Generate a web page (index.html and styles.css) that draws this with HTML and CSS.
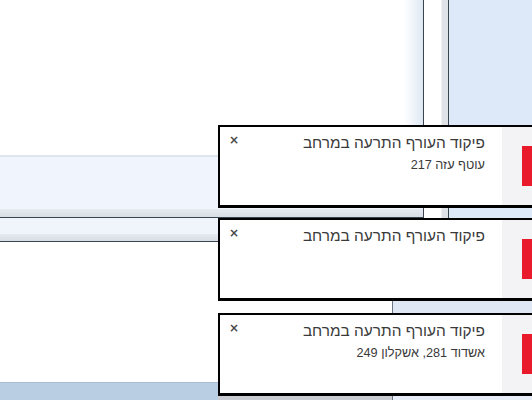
FILE: index.html
```html
<!DOCTYPE html>
<html lang="he">
<head>
<meta charset="utf-8">
<title>התרעות</title>
<link rel="stylesheet" href="styles.css">
</head>
<body>
<div class="desktop">
  <div class="win win-a">
    <div class="win-a-content"></div>
    <div class="status">
      <div class="status-fill"></div>
      <div class="status-edge"></div>
    </div>
  </div>
  <div class="win win-strip"></div>
  <div class="win win-right"></div>
  <div class="win win-b">
    <div class="status-fill short"></div>
    <div class="status-edge"></div>
  </div>
  <div class="win win-c"></div>
  <div class="win win-c-side"></div>
  <div class="taskbar">
    <div class="task-left"></div>
    <div class="task-btn"></div>
    <div class="task-rest"></div>
  </div>

  <div class="toasts">
    <div class="toast">
      <div class="close">×</div>
      <div class="body" dir="rtl">
        <div class="title">פיקוד העורף התרעה במרחב</div>
        <div class="sub">עוטף עזה 217</div>
      </div>
      <div class="side"><div class="flag"></div></div>
    </div>
    <div class="toast second">
      <div class="close">×</div>
      <div class="body" dir="rtl">
        <div class="title">פיקוד העורף התרעה במרחב</div>
        <div class="sub"></div>
      </div>
      <div class="side"><div class="flag"></div></div>
    </div>
    <div class="toast third">
      <div class="close">×</div>
      <div class="body" dir="rtl">
        <div class="title">פיקוד העורף התרעה במרחב</div>
        <div class="sub">אשדוד 281, אשקלון 249</div>
      </div>
      <div class="side"><div class="flag"></div></div>
    </div>
  </div>
</div>
</body>
</html>
```
FILE: styles.css
```css
html, body {
  margin: 0;
  padding: 0;
  width: 532px;
  height: 400px;
  overflow: hidden;
  background: #ffffff;
  font-family: "Liberation Sans", "DejaVu Sans", sans-serif;
}

.desktop {
  position: relative;
  width: 532px;
  height: 400px;
  overflow: hidden;
  background: #dfe7f5;
}

.win {
  position: absolute;
  box-sizing: border-box;
}

.win-a {
  left: 0;
  top: 0;
  width: 424px;
  height: 218px;
  border-right: 1px solid #3c4450;
  border-bottom: 1px solid #3c4450;
  display: flex;
  flex-direction: column;
  background: #ffffff;
}

.win-a-content {
  height: 155px;
  background: linear-gradient(to right, #ffffff 0, #ffffff 404px, #f2f6fb 412px, #dde7f3 423px);
}

.status {
  flex: 1;
  display: flex;
  flex-direction: column;
  border-top: 2px solid #dfe5ee;
}

.status-fill {
  flex: 1;
  background: #eff4fd;
}

.status-fill.short {
  flex: 0 0 16px;
}

.status-edge {
  height: 8px;
  background: linear-gradient(to bottom, #e6eaf0, #d8dee6);
}

.win-strip {
  left: 424px;
  top: 0;
  width: 25px;
  height: 218px;
  border-right: 1px solid #3c4450;
  background: linear-gradient(to right, #ffffff 0, #ffffff 17px, #dfe3e8 18px, #dfe3e8 24px);
}

.win-right {
  left: 449px;
  top: 0;
  width: 83px;
  height: 241px;
  background: #dde9f8;
}

.win-b {
  left: 0;
  top: 218px;
  width: 424px;
  height: 24px;
  border-bottom: 1px solid #3c4450;
  display: flex;
  flex-direction: column;
}

.win-b .status-fill.short {
  background: #f0f5fc;
}

.win-c {
  left: 0;
  top: 242px;
  width: 393px;
  height: 140px;
  border-right: 1px solid #6d7480;
  background: #ffffff;
}

.win-c-side {
  left: 393px;
  top: 242px;
  width: 139px;
  height: 140px;
  background: #dfe7f5;
}

.taskbar {
  position: absolute;
  left: 0;
  top: 382px;
  width: 532px;
  height: 18px;
  display: flex;
  border-top: 1px solid #a9bfd8;
  box-sizing: border-box;
}

.task-left {
  width: 218px;
  background: #b9cde3;
}

.task-btn {
  width: 174px;
  background: #c8ccd2;
  border-right: 1px solid #6d7480;
}

.task-rest {
  flex: 1;
  background: #e6edf7;
}

.toasts {
  position: absolute;
  left: 218px;
  top: 125px;
  display: flex;
  flex-direction: column;
}

.toast {
  width: 322px;
  height: 83px;
  box-sizing: border-box;
  background: #ffffff;
  border-top: 2px solid #000000;
  border-left: 2px solid #000000;
  border-bottom: 3px solid #000000;
  display: flex;
}

.toast.second {
  margin-top: 10px;
}

.toast.third {
  margin-top: 12px;
}

.close {
  width: 28px;
  padding-top: 5px;
  text-align: center;
  font-family: "DejaVu Sans", sans-serif;
  font-size: 12px;
  font-weight: bold;
  line-height: 16px;
  color: #4a4a4a;
}

.body {
  flex: 1;
  padding: 7px 17px 0 0;
  display: flex;
  flex-direction: column;
  gap: 5px;
  color: #3a3a3a;
}

.title {
  font-size: 15.4px;
  line-height: 18px;
  white-space: nowrap;
}

.sub {
  font-size: 12.7px;
  line-height: 16px;
  min-height: 16px;
  white-space: nowrap;
}

.side {
  width: 38px;
  background: #f3f3f5;
  padding-top: 19px;
  box-sizing: border-box;
}

.flag {
  margin-left: 20px;
  height: 40px;
  background: #e81a2b;
}
```
